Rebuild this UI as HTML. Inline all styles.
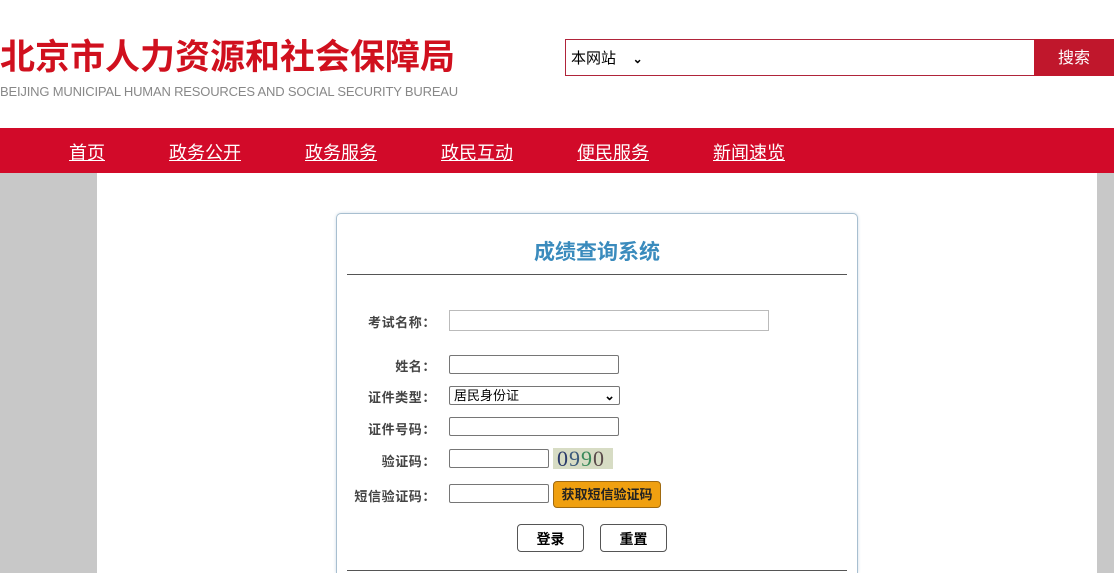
<!DOCTYPE html>
<html style="overflow:hidden;height:573px"><head><meta charset="utf-8"><style>
*{margin:0;padding:0;box-sizing:border-box}
body{width:1114px;height:573px;overflow:hidden;background:#c8c8c8;font-family:"Liberation Sans","Noto Sans CJK SC",sans-serif;position:relative}
.hdr{position:absolute;left:0;top:0;width:1114px;height:128px;background:#fff}
.t1{position:absolute;left:0;top:36px;font-size:35px;font-weight:bold;color:#d0101e;letter-spacing:0px;white-space:nowrap;line-height:44px}
.t2{position:absolute;left:0;top:84px;font-size:13px;color:#888;white-space:nowrap;letter-spacing:-0.18px}
.sbox{position:absolute;left:565px;top:39px;width:470px;height:37px;border:1px solid #b0243a;background:#fff}
.sbox span{position:absolute;left:5px;top:7px;font-size:15px;color:#000}
.sbtn{position:absolute;left:1034px;top:39px;width:80px;height:37px;background:#c0172c;color:#fff;font-size:16px;text-align:center;line-height:40px}
.nav{position:absolute;left:0;top:128px;width:1114px;height:45px;background:#d20a29}
.nav a{position:absolute;top:14px;color:#fff;font-size:18px;text-decoration:underline;line-height:22px}
.main{position:absolute;left:97px;top:173px;width:1000px;height:400px;background:#fff}
.card{position:absolute;left:336px;top:213px;width:522px;height:360px;border:1px solid #a8bfd0;border-bottom:none;border-radius:5px 5px 0 0;background:#fff;box-shadow:0 0 3px #cfdbe5;overflow:hidden}
.title{position:absolute;left:0;width:100%;top:22px;text-align:center;font-size:21px;font-weight:bold;color:#3a8bbd}
.hr{position:absolute;left:10px;width:500px;height:1px;background:#555}
.lb{position:absolute;font-size:13px;color:#444;font-weight:bold;text-align:right;width:120px;left:-28px;letter-spacing:0.6px}
.in{position:absolute;border:1px solid #767676;border-radius:2px;height:19px;background:#fff}
.btn{position:absolute;top:310px;height:28px;border:1px solid #555;border-radius:4px;font-size:14px;font-weight:bold;text-align:center;line-height:28px;color:#000;background:#fff}
</style></head><body>
<div class="hdr">
<div class="t1">北京市人力资源和社会保障局</div>
<div class="t2">BEIJING MUNICIPAL HUMAN RESOURCES AND SOCIAL SECURITY BUREAU</div>
<div class="sbox"><span>本网站&nbsp;&nbsp;&nbsp;&nbsp;<b style="font-size:12px">⌄</b></span></div>
<div class="sbtn">搜索</div>
</div>
<div class="nav">
<a style="left:69px">首页</a><a style="left:169px">政务公开</a><a style="left:305px">政务服务</a><a style="left:441px">政民互动</a><a style="left:577px">便民服务</a><a style="left:713px">新闻速览</a>
</div>
<div class="main"></div>
<div class="card">
<div class="title">成绩查询系统</div>
<div class="hr" style="top:60px"></div>
<div class="lb" style="top:98px;left:-21px">考试名称：</div>
<div class="in" style="left:112px;top:96px;width:320px;height:21px;border-color:#bbb;border-radius:0"></div>
<div class="lb" style="top:142px;left:-21px">姓名：</div>
<div class="in" style="left:112px;top:141px;width:170px"></div>
<div class="lb" style="top:173px;left:-21px">证件类型：</div>
<div class="in" style="left:112px;top:172px;width:171px;height:19px;font-size:13px;padding-left:4px;line-height:17px;color:#000">居民身份证<span style="position:absolute;right:4px;top:0;font-weight:bold">⌄</span></div>
<div class="lb" style="top:205px;left:-21px">证件号码：</div>
<div class="in" style="left:112px;top:203px;width:170px"></div>
<div class="lb" style="top:237px;left:-21px">验证码：</div>
<div class="in" style="left:112px;top:235px;width:100px"></div>
<div style="position:absolute;left:216px;top:234px;width:60px;height:21px;background:#d7dcc4;font-family:'Liberation Serif',serif;font-size:22px;line-height:21px;letter-spacing:1px;padding-left:4px"><span style="color:#2a3a6a">0</span><span style="color:#3a5a7a">9</span><span style="color:#3a8a5a">9</span><span style="color:#5a4a4a">0</span></div>
<div class="lb" style="top:272px;left:-21px">短信验证码：</div>
<div class="in" style="left:112px;top:270px;width:100px"></div>
<div style="position:absolute;left:216px;top:267px;width:108px;height:27px;background:#f0a010;border:1px solid #a06a10;border-radius:4px;font-size:13px;font-weight:bold;text-align:center;line-height:25px;color:#222">获取短信验证码</div>
<div class="btn" style="left:180px;width:67px">登录</div>
<div class="btn" style="left:263px;width:67px">重置</div>
<div class="hr" style="top:356px"></div>
</div>
</body></html>
